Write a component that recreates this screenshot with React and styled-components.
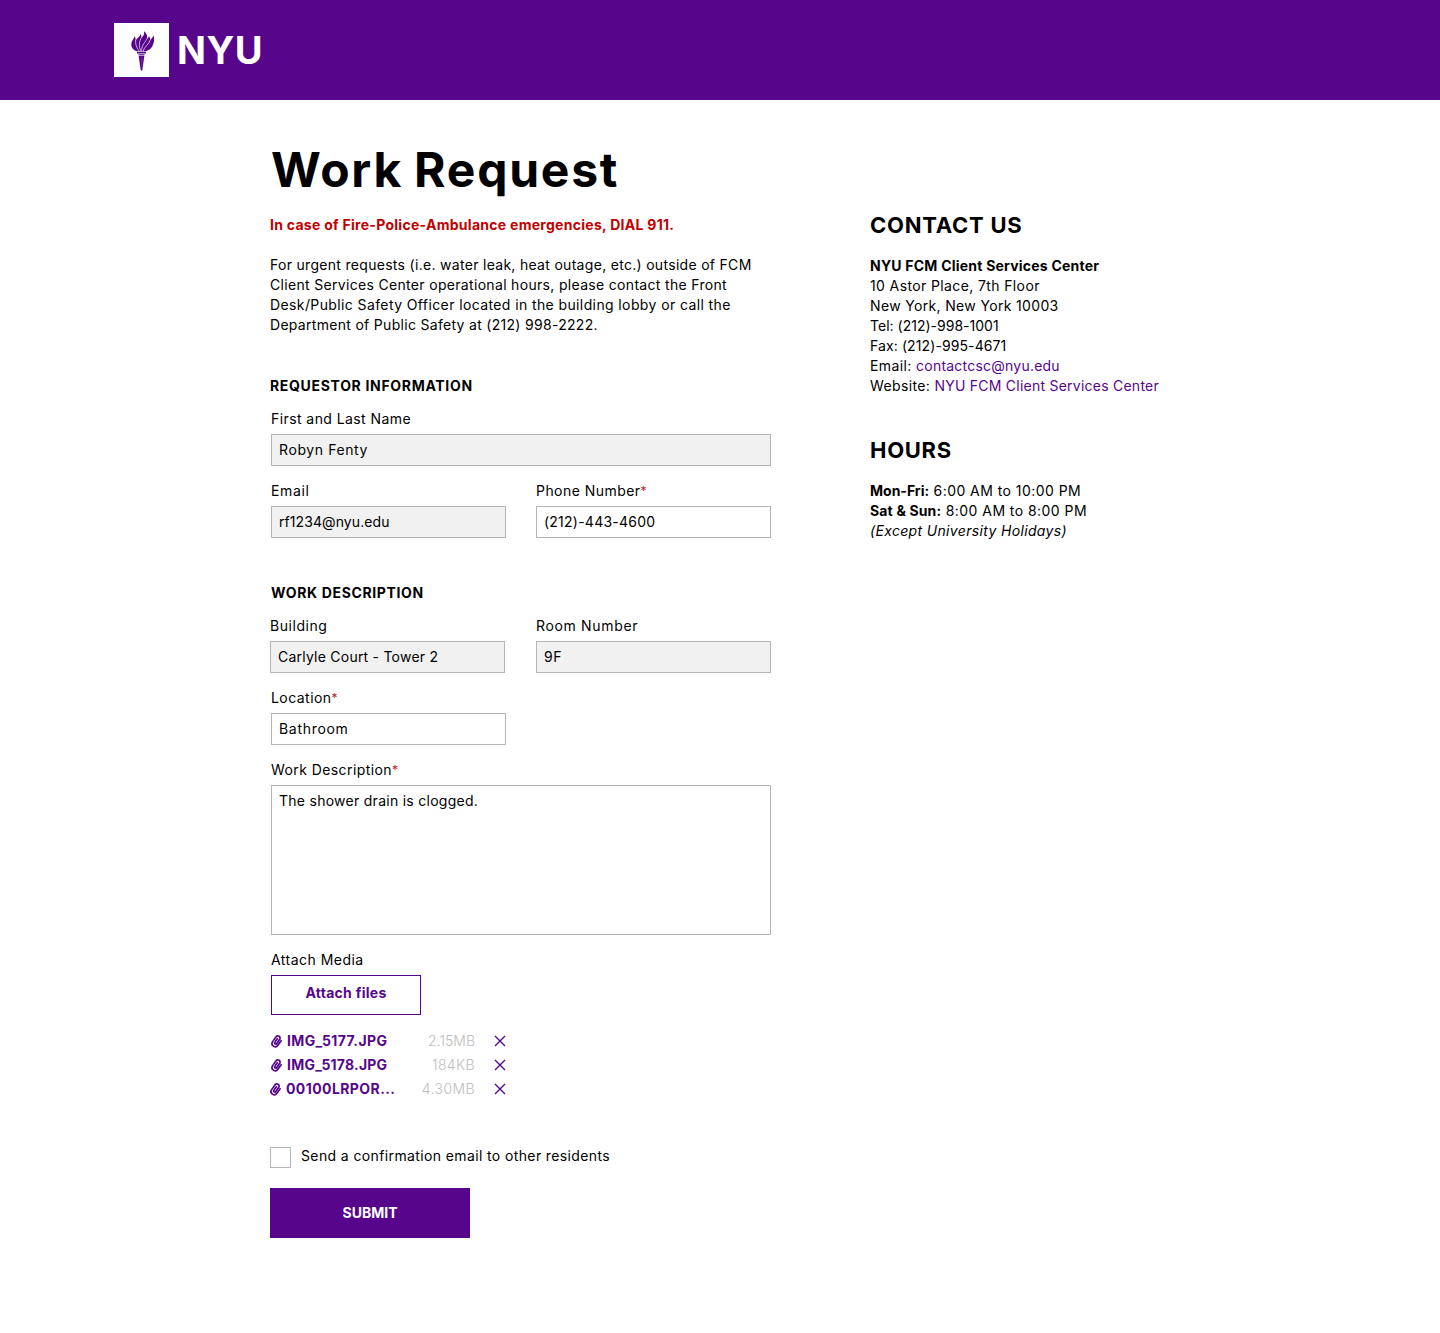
import React from 'react';
import styled, { createGlobalStyle, css } from 'styled-components';

const violet = '#57068c';

const GlobalStyle = createGlobalStyle`
  *, *::before, *::after { box-sizing: border-box; }
  body {
    margin: 0;
    background: #fff;
    color: #000;
    font: 400 14px/20px Gotham, Inter, 'Liberation Sans', sans-serif;
  }
`;

const tracking = css`
  letter-spacing: ${({ $track = 0.35 }) => $track}px;
`;

const Header = styled.header`
  display: flex;
  align-items: center;
  height: 100px;
  padding-left: 114px;
  background: ${violet};
`;

const TorchMark = styled.svg`
  display: block;
  width: 55px;
  height: 54px;
`;

const Wordmark = styled.span`
  margin-left: 8px;
  color: #fff;
  font-size: 38px;
  line-height: 54px;
  font-weight: 700;
  letter-spacing: 0.5px;
`;

const Page = styled.main`
  display: grid;
  grid-template-columns: 501px 320px;
  column-gap: 99px;
  padding: 40px 0 95px 270px;
`;

const Title = styled.h1`
  grid-column: 1 / -1;
  margin: 0;
  padding-left: 1px;
  height: 75px;
  font-size: 48px;
  line-height: 60px;
  font-weight: 700;
  word-spacing: -2px;
  ${tracking}
`;

const Form = styled.form`
  display: flex;
  flex-direction: column;
  align-items: flex-start;
`;

const Alert = styled.p`
  margin: 0 0 20px;
  color: #c00000;
  font-weight: 700;
  ${tracking}
`;

const Intro = styled.p`
  margin: 0 0 41px;
`;

const Line = styled.span`
  display: block;
  white-space: nowrap;
  ${tracking}
`;

const Section = styled.section`
  display: flex;
  flex-direction: column;
  gap: 15px;
  width: 100%;
  margin-bottom: ${({ $after = 0 }) => $after}px;
`;

const SectionTitle = styled.h2`
  margin: 0 0 -2px ${({ $inset = 0 }) => $inset}px;
  font-size: 14px;
  line-height: 20px;
  font-weight: 700;
  ${tracking}
`;

const FieldRow = styled.div`
  display: flex;
  justify-content: space-between;
  padding-left: ${({ $inset = 1 }) => $inset}px;
`;

const Field = styled.div`
  display: flex;
  flex-direction: column;
  gap: 5px;
  width: ${({ $full }) => ($full ? '100%' : '235px')};
`;

const Label = styled.label`
  height: 20px;
  white-space: nowrap;
  ${tracking}
`;

const Star = styled.span`
  color: #c8102e;
  font-size: 12px;
  line-height: 1;
  vertical-align: 1px;
`;

const control = css`
  display: block;
  width: 100%;
  margin: 0;
  border: 1px solid #b5b5b5;
  border-radius: 0;
  outline: none;
  background: ${({ readOnly }) => (readOnly ? '#f1f1f1' : '#fff')};
  color: #000;
  font: inherit;
  ${tracking}
`;

const Input = styled.input`
  ${control}
  height: 32px;
  padding: 4px 7px 6px;
`;

const TextArea = styled.textarea`
  ${control}
  height: 150px;
  padding: 5px 7px;
  resize: none;
`;

const AttachButton = styled.button`
  width: 150px;
  height: 40px;
  padding: 0 0 4px;
  border: 1px solid ${violet};
  background: #fff;
  color: ${violet};
  font: inherit;
  font-weight: 700;
  ${tracking}
`;

const FileList = styled.ul`
  display: flex;
  flex-direction: column;
  gap: 4px;
  width: 236px;
  margin: 0 0 47px;
  padding: 0;
  list-style: none;
`;

const FileRow = styled.li`
  display: flex;
  align-items: center;
  height: 20px;
  padding-left: ${({ $inset }) => $inset}px;
`;

const ClipIcon = styled.svg`
  flex: none;
  width: 12px;
  height: 14px;
  margin-right: 4px;
`;

const FileName = styled.span`
  color: ${violet};
  font-weight: 700;
  ${tracking}
`;

const FileSize = styled.span`
  margin-left: auto;
  margin-right: 19px;
  color: #bdbdbd;
  font-weight: 300;
  ${tracking}
`;

const RemoveIcon = styled.svg`
  flex: none;
  width: 12px;
  height: 12px;
`;

const Confirm = styled.label`
  display: flex;
  gap: 10px;
  height: 22px;
  margin-bottom: 20px;
`;

const Checkbox = styled.input`
  appearance: none;
  width: 21px;
  height: 21px;
  margin: 1px 0 0;
  border: 1px solid #b5b5b5;
  background: #fff;
`;

const Submit = styled.button`
  width: 200px;
  height: 50px;
  padding: 0;
  border: 0;
  background: ${violet};
  color: #fff;
  font: inherit;
  font-weight: 700;
`;

const Aside = styled.aside`
  display: flex;
  flex-direction: column;
  margin-top: -5px;
`;

const AsideTitle = styled.h2`
  margin: 0 0 16px;
  font-size: 22px;
  line-height: 30px;
  font-weight: 700;
  ${tracking}
`;

const AsideBlock = styled.div`
  margin-bottom: 39px;
`;

const Strong = styled.strong`
  font-weight: 700;
  ${tracking}
`;

const Em = styled.em`
  ${tracking}
`;

const Link = styled.a`
  color: ${violet};
  text-decoration: none;
  ${tracking}
`;

function Torch() {
  return (
    <TorchMark viewBox="30 27 165 162">
      <rect x="30" y="27" width="165" height="162" fill="#fff" />
      <g fill={violet}>
        <path d="M100 112C88 109 81 100 82 89C83 80 89 76 92 67C95 72 95 76 95 80C98 71 109 70 109 59C112 63 113 67 112 72C118 66 122 61 120 52C128 58 131 66 129 74C134 71 135 69 134 66C138 69 139 74 138 79C143 74 147 70 149 64C152 76 150 88 145 97C140 106 133 110 125 112Z" />
        <path d="M99 113.500H126V118.500H99Z" />
        <path d="M103 120.500H122L121 124H104Z" />
        <path d="M104 125.500H121L115 168Q112.500 172 110 168Z" />
      </g>
      <g fill="none" stroke="#fff" strokeWidth="2" strokeLinecap="round">
        <path d="M95 78C93 90 98 101 105 111" />
        <path d="M112 71C106 83 103 95 110 110" />
        <path d="M129 74C124 86 113 91 113 109" />
        <path d="M138 79C135 93 120 97 118 110" />
      </g>
      <path d="M112.500 128V156" stroke="#fff" strokeWidth="1" opacity="0.45" />
    </TorchMark>
  );
}

function Clip() {
  return (
    <ClipIcon viewBox="0 0 12 14" fill="none" stroke={violet} strokeWidth="1.7" strokeLinecap="round" strokeLinejoin="round">
      <g transform="rotate(35 6 7)">
        <path d="M9.200 4.500V10A3.200 3.200 0 0 1 2.800 10V3.400A2.400 2.400 0 0 1 7.200 3.400V9.400A1.100 1.100 0 0 1 5 9.400V5" />
      </g>
    </ClipIcon>
  );
}

function Remove() {
  return (
    <RemoveIcon viewBox="0 0 12 12" fill="none" stroke={violet} strokeWidth="1.4">
      <path d="M1 1L11 11M11 1L1 11" />
    </RemoveIcon>
  );
}

function TextField({ label, labelTrack, value, track, required, locked, full }) {
  return (
    <Field $full={full}>
      <Label $track={labelTrack}>
        {label}
        {required && <Star>*</Star>}
      </Label>
      <Input defaultValue={value} readOnly={locked} $track={track} />
    </Field>
  );
}

const files = [
  { name: 'IMG_5177.JPG', size: '2.15MB', inset: 1, track: 0.38, sizeTrack: 0.02 },
  { name: 'IMG_5178.JPG', size: '184KB', inset: 1, track: 0.22, sizeTrack: 0.4 },
  { name: '00100LRPOR...', size: '4.30MB', inset: 0, track: 0.42, sizeTrack: 0.4 },
];

export default function App() {
  return (
    <>
      <GlobalStyle />
      <Header>
        <Torch />
        <Wordmark>NYU</Wordmark>
      </Header>
      <Page>
        <Title $track={1.75}>Work Request</Title>
        <Form onSubmit={(e) => e.preventDefault()}>
          <Alert $track={0.28}>In case of Fire-Police-Ambulance emergencies, DIAL 911.</Alert>
          <Intro>
            <Line $track={0.3}>For urgent requests (i.e. water leak, heat outage, etc.) outside of FCM</Line>
            <Line $track={0.32}>Client Services Center operational hours, please contact the Front</Line>
            <Line $track={0.39}>Desk/Public Safety Officer located in the building lobby or call the</Line>
            <Line $track={0.3}>Department of Public Safety at (212) 998-2222.</Line>
          </Intro>

          <Section $after={45}>
            <SectionTitle $track={0.68}>REQUESTOR INFORMATION</SectionTitle>
            <FieldRow>
              <TextField full locked label="First and Last Name" labelTrack={0.42} value="Robyn Fenty" track={0.6} />
            </FieldRow>
            <FieldRow>
              <TextField locked label="Email" labelTrack={0.65} value="rf1234@nyu.edu" track={0.08} />
              <TextField required label="Phone Number" labelTrack={0.45} value="(212)-443-4600" track={0.24} />
            </FieldRow>
          </Section>

          <Section $after={16}>
            <SectionTitle $inset={1} $track={0.64}>WORK DESCRIPTION</SectionTitle>
            <FieldRow $inset={0}>
              <TextField locked label="Building" labelTrack={0.55} value="Carlyle Court - Tower 2" track={0.23} />
              <TextField locked label="Room Number" labelTrack={0.66} value="9F" track={0.5} />
            </FieldRow>
            <FieldRow>
              <TextField required label="Location" labelTrack={0.45} value="Bathroom" track={0.7} />
            </FieldRow>
            <FieldRow>
              <Field $full>
                <Label $track={0.42}>
                  Work Description<Star>*</Star>
                </Label>
                <TextArea defaultValue="The shower drain is clogged." $track={0.27} />
              </Field>
            </FieldRow>
            <FieldRow>
              <Field>
                <Label $track={0.47}>Attach Media</Label>
                <AttachButton type="button" $track={0.28}>Attach files</AttachButton>
              </Field>
            </FieldRow>
          </Section>

          <FileList>
            {files.map((file) => (
              <FileRow key={file.name} $inset={file.inset}>
                <Clip />
                <FileName $track={file.track}>{file.name}</FileName>
                <FileSize $track={file.sizeTrack}>{file.size}</FileSize>
                <Remove />
              </FileRow>
            ))}
          </FileList>

          <Confirm>
            <Checkbox type="checkbox" />
            <Line $track={0.38}>Send a confirmation email to other residents</Line>
          </Confirm>
          <Submit type="submit">SUBMIT</Submit>
        </Form>

        <Aside>
          <AsideTitle $track={0.76}>CONTACT US</AsideTitle>
          <AsideBlock>
            <Line><Strong $track={0.22}>NYU FCM Client Services Center</Strong></Line>
            <Line $track={0.38}>10 Astor Place, 7th Floor</Line>
            <Line $track={0.34}>New York, New York 10003</Line>
            <Line $track={0.01}>Tel: (212)-998-1001</Line>
            <Line $track={0.1}>Fax: (212)-995-4671</Line>
            <Line $track={0.4}>Email: <Link $track={0.22}>contactcsc@nyu.edu</Link></Line>
            <Line $track={0.36}>Website: <Link $track={0.24}>NYU FCM Client Services Center</Link></Line>
          </AsideBlock>
          <AsideTitle $track={0.7}>HOURS</AsideTitle>
          <AsideBlock>
            <Line $track={0.45}><Strong $track={0}>Mon-Fri:</Strong> 6:00 AM to 10:00 PM</Line>
            <Line $track={0.45}><Strong $track={0.16}>Sat &amp; Sun:</Strong> 8:00 AM to 8:00 PM</Line>
            <Line><Em $track={0.34}>(Except University Holidays)</Em></Line>
          </AsideBlock>
        </Aside>
      </Page>
    </>
  );
}
